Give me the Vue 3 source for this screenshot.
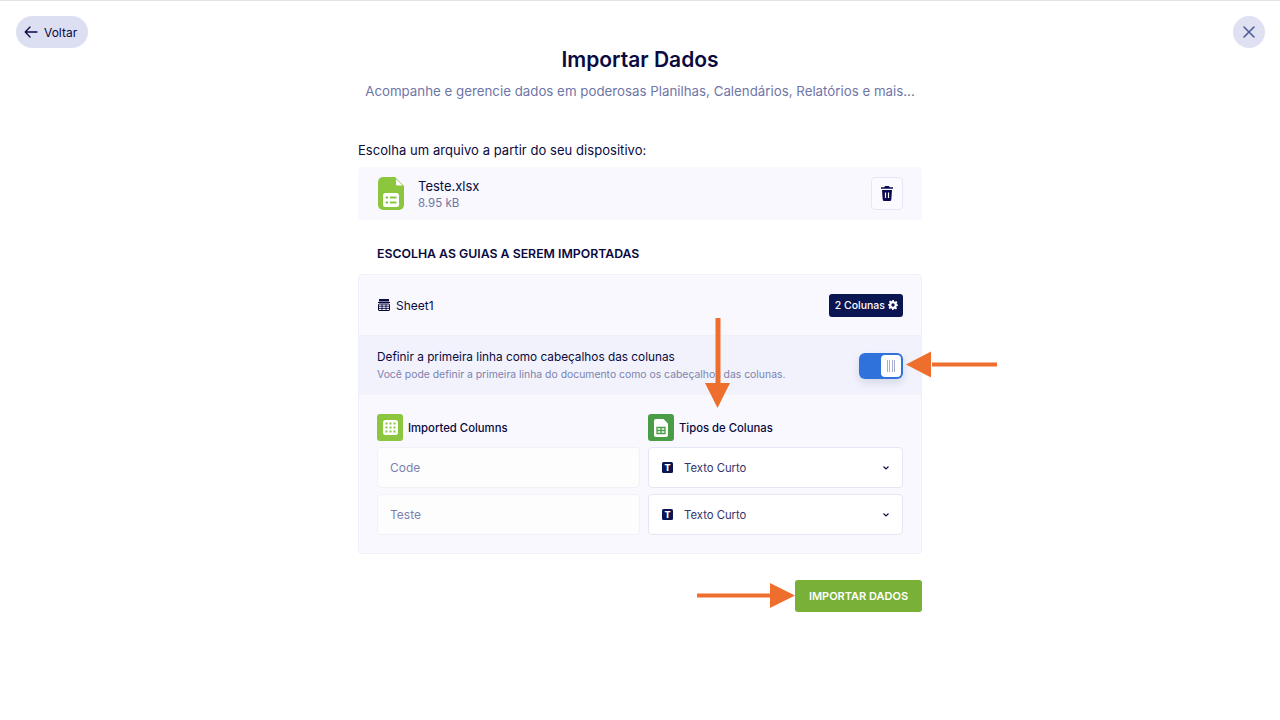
<template>
  <div class="page">
    <div class="side">
      <button class="back">
        <svg width="14" height="12" viewBox="0 0 14 12" fill="none" stroke="#0a0a40" stroke-width="1.300" stroke-linecap="round" stroke-linejoin="round"><path d="M13 6H1.200M6 1 1.200 6 6 11" /></svg>
        Voltar
      </button>
    </div>

    <main class="main">
      <h1>Importar Dados</h1>
      <p class="sub">Acompanhe e gerencie dados em poderosas Planilhas, Calendários, Relatórios e mais...</p>

      <p class="choose">Escolha um arquivo a partir do seu dispositivo:</p>
      <div class="file">
        <svg class="file-icon" width="26" height="33" viewBox="0 0 26 33">
          <path d="M5 0H17L26 9V28A5 5 0 0 1 21 33H5A5 5 0 0 1 0 28V5A5 5 0 0 1 5 0Z" fill="#8cc63f" />
          <path d="M18 2 24.500 8.500H19.500A1.500 1.500 0 0 1 18 7Z" fill="#fff" />
          <rect x="5" y="16" width="16" height="14" rx="2.500" fill="#fff" />
          <path d="M7.500 20.500h2.500M12 20.500h6.500M7.500 25.500h2.500M12 25.500h6.500" stroke="#8cc63f" stroke-width="2.200" />
        </svg>
        <div class="file-info">
          <div class="file-name">Teste.xlsx</div>
          <div class="file-size">8.95 kB</div>
        </div>
        <button class="trash">
          <svg width="12" height="15" viewBox="0 0 12 15">
            <path d="M4 0h4l.6 1.200H12v1.600H0V1.200h3.400Z" fill="#0a0a50" />
            <path d="M1 4h10l-.7 9.500A1.500 1.500 0 0 1 8.800 15H3.200a1.500 1.500 0 0 1-1.500-1.500Z" fill="#0a0a50" />
            <path d="M4.500 6.500v5.500M7.500 6.500v5.500" stroke="#fff" stroke-width="1.200" />
          </svg>
        </button>
      </div>

      <h2>ESCOLHA AS GUIAS A SEREM IMPORTADAS</h2>

      <section class="panel">
        <div class="sheet">
          <div class="sheet-name">
            <svg width="12" height="12" viewBox="0 0 12 12" fill="none" stroke="#0a0a40">
              <path d="M1 0h10v2.500H1Z" fill="#0a0a40" stroke="none" />
              <path d="M0 3.500h12" />
              <rect x=".5" y="5" width="11" height="6.500" rx=".5" />
              <path d="M.5 7.200h11M.5 9.400h11M4 5v6.500M8 5v6.500" stroke-width=".9" />
            </svg>
            Sheet1
          </div>
          <span class="badge">
            2 Colunas
            <svg width="10" height="10" viewBox="0 0 24 24" fill="#fff"><path fill-rule="evenodd" d="M10 0h4l.7 3.400 2.300 1 2.900-1.900 2.800 2.800-1.900 2.900 1 2.300L24 11v3l-3.200.7-1 2.300 1.900 2.900-2.800 2.800-2.900-1.900-2.300 1L13 24h-3l-.7-3.200-2.300-1-2.900 1.900-2.800-2.800 1.900-2.900-1-2.300L0 13v-3l3.200-.7 1-2.300-1.900-2.900 2.800-2.800 2.900 1.900 2.300-1ZM12 8a4 4 0 1 0 0 8 4 4 0 0 0 0-8Z" /></svg>
          </span>
        </div>

        <div class="first-row">
          <div>
            <div class="first-title">Definir a primeira linha como cabeçalhos das colunas</div>
            <div class="first-hint">Você pode definir a primeira linha do documento como os cabeçalhos das colunas.</div>
          </div>
          <div class="toggle">
            <span class="knob"><i></i><i></i><i></i><i></i></span>
          </div>
        </div>

        <div class="columns">
          <div class="col-head">
            <span class="head-icon light">
              <svg width="15" height="15" viewBox="0 0 15 15">
                <rect width="15" height="15" rx="2.500" fill="#fff" />
                <path d="M2.500 3.500h2v0M6.500 3.500h2M10.500 3.500h2M2.500 7.500h2M6.500 7.500h2M10.500 7.500h2M2.500 11.500h2M6.500 11.500h2M10.500 11.500h2" stroke="#8cc63f" stroke-width="2" />
              </svg>
            </span>
            Imported Columns
          </div>
          <div class="col-head">
            <span class="head-icon dark">
              <svg width="14" height="18" viewBox="0 0 14 18">
                <path d="M2 0h7.500L14 4.500V16a2 2 0 0 1-2 2H2a2 2 0 0 1-2-2V2a2 2 0 0 1 2-2Z" fill="#fff" />
                <path d="M3 8.500h8v6H3ZM3 11.500h8M7 8.500v6" fill="none" stroke="#4a9d46" stroke-width="1.300" />
              </svg>
            </span>
            Tipos de Colunas
          </div>
          <template v-for="row in rows" :key="row">
            <div class="field">{{ row }}</div>
            <div class="select">
              <span class="t-icon">T</span>
              <span class="select-text">Texto Curto</span>
              <svg width="6" height="4" viewBox="0 0 6 4" fill="none" stroke="#0a0a40" stroke-width="1.100"><path d="M.5.500 3 3 5.500.500" /></svg>
            </div>
          </template>
        </div>
      </section>

      <div class="actions">
        <button class="import">IMPORTAR DADOS</button>
      </div>
    </main>

    <div class="side right">
      <button class="close">
        <svg width="12" height="12" viewBox="0 0 12 12" stroke="#4f5a96" stroke-width="1.600" stroke-linecap="round"><path d="M1 1l10 10M11 1 1 11" /></svg>
      </button>
    </div>

    <!-- setas laranja por cima da tela -->
    <svg class="arrows" width="1280" height="720" viewBox="0 0 1280 720">
      <g fill="#ee6f2d">
        <path d="M715.500 318h5v66h-5Z" />
        <path d="M705 383h25l-12.500 25Z" />
        <path d="M932 362.500h65v4h-65Z" />
        <path d="M906 364.500 931 351.500v26Z" />
        <path d="M697 593.500h74v4h-74Z" />
        <path d="M770 583v25l25-12.500Z" />
      </g>
    </svg>
  </div>
</template>

<script setup>
const rows = ['Code', 'Teste']
</script>

<style scoped>
.page {
  position: relative;
  display: grid;
  grid-template-columns: 1fr 564px 1fr;
  height: 719px;
  overflow: hidden;
  border-top: 1px solid #e4e4e4;
  background: #fff;
  font-family: "Inter", "Lato", sans-serif;
  color: #0a0a40;
}
button {
  font-family: inherit;
  border: none;
  cursor: pointer;
}
.side {
  padding: 15px 16px;
}
.right {
  display: flex;
  justify-content: flex-end;
  padding-right: 15px;
}
.back {
  display: flex;
  align-items: center;
  gap: 6px;
  width: 72px;
  height: 32px;
  padding: 0 0 0 8px;
  border-radius: 16px;
  background: #dcdef2;
  color: #0a0a40;
  font-size: 12px;
}
.close {
  display: flex;
  align-items: center;
  justify-content: center;
  width: 32px;
  height: 32px;
  padding: 0;
  border-radius: 50%;
  background: #dfe1f3;
}
h1 {
  margin: 45px 0 0;
  font-size: 21px;
  line-height: 28px;
  font-weight: 600;
  text-align: center;
  color: #0a0a40;
}
.sub {
  margin: 8px 0 0;
  font-size: 13.300px;
  line-height: 18px;
  text-align: center;
  white-space: nowrap;
  color: #6f76a7;
}
.choose {
  margin: 41px 0 0;
  font-size: 13px;
  line-height: 18px;
  letter-spacing: .05px;
}
.file {
  display: flex;
  align-items: center;
  height: 53px;
  margin-top: 8px;
  padding: 0 19px 0 20px;
  border-radius: 4px;
  background: #f8f8fe;
}
.file-info {
  flex: 1;
  margin-left: 14px;
  padding-top: 1px;
}
.file-name {
  font-size: 13px;
  line-height: 18px;
}
.file-size {
  margin-top: 1px;
  font-size: 11.500px;
  line-height: 15px;
  color: #6f76a7;
}
.trash {
  display: flex;
  align-items: center;
  justify-content: center;
  width: 32px;
  height: 33px;
  padding: 0;
  border: 1px solid #e6e7f6;
  border-radius: 4px;
  background: #fbfbff;
}
h2 {
  margin: 25px 0 11px 19px;
  font-size: 12.300px;
  line-height: 18px;
  font-weight: 600;
  color: #0a0a40;
}
.panel {
  box-sizing: border-box;
  height: 280px;
  border: 1px solid #f0f0fa;
  border-radius: 4px;
  background: #f8f8fe;
}
.sheet {
  display: flex;
  align-items: center;
  justify-content: space-between;
  height: 60px;
  padding: 0 18px 0 19px;
  border-bottom: 1px solid #eff0fa;
}
.sheet-name {
  display: flex;
  align-items: center;
  gap: 6px;
  font-size: 12px;
}
.badge {
  display: flex;
  align-items: center;
  gap: 3px;
  height: 23px;
  padding: 0 5px 0 6px;
  border-radius: 3px;
  background: #0a1551;
  color: #fff;
  font-size: 10.500px;
  font-weight: 500;
}
.first-row {
  display: flex;
  align-items: center;
  justify-content: space-between;
  height: 59px;
  padding: 0 18px 0 18px;
  background: #f1f2fc;
}
.first-title {
  font-size: 11.800px;
  line-height: 17px;
}
.first-hint {
  margin-top: 2px;
  font-size: 10.400px;
  line-height: 14px;
  color: #7c82ad;
}
.toggle {
  display: flex;
  justify-content: flex-end;
  width: 44px;
  height: 26px;
  padding: 2px;
  box-sizing: border-box;
  border-radius: 6px;
  background: #2f72dc;
  box-shadow: 0 4px 8px rgba(10, 21, 81, .12);
}
.knob {
  display: flex;
  align-items: center;
  justify-content: center;
  gap: 1.500px;
  width: 20px;
  height: 22px;
  border-radius: 4px;
  background: #fff;
}
.knob i {
  width: 1px;
  height: 12px;
  background: #a9aed0;
}
.columns {
  display: grid;
  grid-template-columns: 263px 255px;
  grid-template-rows: 27px 41px 41px;
  column-gap: 8px;
  row-gap: 6px;
  padding: 19px 0 0 18px;
}
.col-head {
  display: flex;
  align-items: center;
  gap: 5px;
  height: 27px;
  font-size: 11.300px;
  font-weight: 500;
}
.head-icon {
  display: flex;
  align-items: center;
  justify-content: center;
  width: 26px;
  height: 27px;
  border-radius: 3px;
}
.light {
  background: #8cc63f;
}
.dark {
  background: #4a9d46;
}
.field,
.select {
  display: flex;
  align-items: center;
  box-sizing: border-box;
  border-radius: 4px;
  font-size: 12px;
}
.field {
  padding-left: 12px;
  border: 1px solid #f1f1f8;
  background: #fdfdfe;
  color: #7c82ad;
}
.select {
  padding: 0 13px;
  border: 1px solid #e5e6f5;
  background: #fff;
  color: #33336a;
  font-size: 11.300px;
}
.t-icon {
  display: flex;
  align-items: center;
  justify-content: center;
  width: 11px;
  height: 11px;
  border-radius: 1.500px;
  background: #0a1551;
  color: #fff;
  font-size: 9px;
  font-weight: 800;
}
.select-text {
  flex: 1;
  margin-left: 11px;
}
.actions {
  display: flex;
  justify-content: flex-end;
  margin-top: 26px;
}
.import {
  width: 127px;
  height: 32px;
  border-radius: 3px;
  background: #78b038;
  color: #fff;
  font-size: 11px;
  font-weight: 600;
}
.arrows {
  position: absolute;
  top: -1px;
  left: 0;
  pointer-events: none;
}
</style>

<style>
body {
  margin: 0;
}
</style>
